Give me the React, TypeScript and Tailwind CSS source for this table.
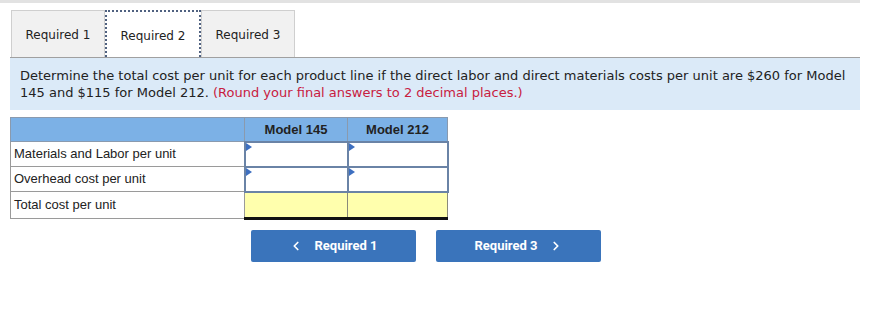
import { ChevronLeft, ChevronRight } from "lucide-react";

const tabs = ["Required 1", "Required 2", "Required 3"];

const InputCell = () => (
  <td className="relative h-[25px] border-2 border-[#6a83a6] bg-white p-0">
    <span className="absolute left-0 top-0 h-0 w-0 border-y-[4px] border-l-[6px] border-y-transparent border-l-[#3d6fc0]" />
  </td>
);

const App = () => {
  return (
    <div className="h-[328px] w-[889px] bg-white" style={{ fontFamily: "'DejaVu Sans', Verdana, sans-serif" }}>
      <div className="h-[3px] w-[860px] bg-[#e2e2e2]" />

      {/* tab strip */}
      <div className="mt-[7px] flex pl-[11px]">
        {tabs.map((t, i) =>
          i === 1 ? (
            <div
              key={t}
              className="flex h-[47px] w-[96px] items-center justify-center border-2 border-b-0 border-dotted border-[#4f6180] bg-white pt-[2px] text-[12px] text-[#222]"
            >
              {t}
            </div>
          ) : (
            <div
              key={t}
              className="flex h-[47px] w-[94px] items-center justify-center border border-b-0 border-[#cfcfcf] bg-[#f1f1f1] pt-[2px] text-[12px] text-[#222]"
            >
              {t}
            </div>
          )
        )}
      </div>

      {/* instructions */}
      <div className="ml-[10px] w-[850px] whitespace-nowrap border-t border-[#a0a0a0] bg-[#dbeaf8] px-[10px] pb-[9px] pt-[9px] text-[13px] leading-[17px] text-[#222]">
        Determine the total cost per unit for each product line if the direct labor and direct materials costs per unit are $260 for Model
        <br />
        145 and $115 for Model 212. <span className="text-[#c8203f]">(Round your final answers to 2 decimal places.)</span>
      </div>

      {/* cost table */}
      <table
        className="ml-[10px] mt-[7px] border-collapse text-[13px] text-[#222]"
        style={{ fontFamily: "'Liberation Sans', Arial, sans-serif" }}
      >
        <thead>
          <tr className="h-[24px] bg-[#7cb1e6]">
            <th className="w-[234px] border border-[#8a9aae]" />
            <th className="w-[103px] border border-[#8a9aae] font-bold">Model 145</th>
            <th className="w-[100px] border border-[#8a9aae] font-bold">Model 212</th>
          </tr>
        </thead>
        <tbody>
          <tr>
            <td className="h-[25px] border border-[#9a9a9a] pl-[3px]">Materials and Labor per unit</td>
            <InputCell />
            <InputCell />
          </tr>
          <tr>
            <td className="h-[25px] border border-[#9a9a9a] pl-[3px]">Overhead cost per unit</td>
            <InputCell />
            <InputCell />
          </tr>
          <tr>
            <td className="h-[27px] border border-[#9a9a9a] pl-[3px]">Total cost per unit</td>
            <td className="border border-x-[#8a8a7a] border-b-[3px] border-b-double border-t-[#222] border-b-[#111] bg-[#ffffad]" />
            <td className="border border-x-[#8a8a7a] border-b-[3px] border-b-double border-t-[#222] border-b-[#111] bg-[#ffffad]" />
          </tr>
        </tbody>
      </table>

      {/* navigation */}
      <div className="ml-[251px] mt-[10px] flex gap-[20px]" style={{ fontFamily: "Roboto, sans-serif" }}>
        <button className="flex h-[32px] w-[165px] items-center justify-center gap-[11px] rounded-[2px] bg-[#3a74bb] text-[13px] font-bold text-white">
          <ChevronLeft className="h-[14px] w-[14px]" strokeWidth={3} />
          Required 1
        </button>
        <button className="flex h-[32px] w-[165px] items-center justify-center gap-[11px] rounded-[2px] bg-[#3a74bb] text-[13px] font-bold text-white">
          Required 3
          <ChevronRight className="h-[14px] w-[14px]" strokeWidth={3} />
        </button>
      </div>
    </div>
  );
};

export default App;
